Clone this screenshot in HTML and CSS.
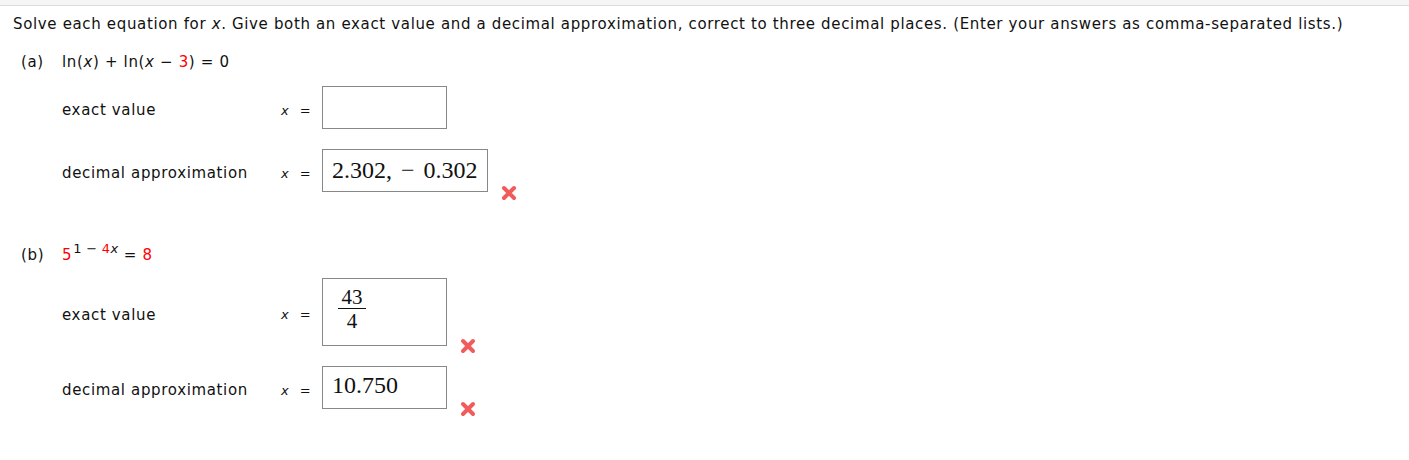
FILE: index.html
```html
<!DOCTYPE html>
<html>
<head>
<meta charset="utf-8">
<link rel="stylesheet" href="styles.css">
</head>
<body>
<div class="topbar"></div>
<div class="content">
  <p class="intro">Solve each equation for <i>x</i>. Give both an exact value and a decimal approximation, correct to three decimal places. (Enter your answers as comma-separated lists.)</p>

  <div class="part part-a">
    <span class="tag">(a)</span>
    <span class="eq">ln(<i>x</i>) + ln(<i>x</i> &minus; <span class="red">3</span>) = 0</span>
  </div>

  <div class="row row-a1">
    <span class="label">exact value</span>
    <span class="xeq"><i>x</i><span class="eqsign">=</span></span>
    <span class="box box-a1"></span>
  </div>

  <div class="row row-a2">
    <span class="label">decimal approximation</span>
    <span class="xeq"><i>x</i><span class="eqsign">=</span></span>
    <span class="box box-a2"><span class="math">2.302, &minus; 0.302</span></span>
    <span class="wrong"><svg viewBox="0 0 16 16" width="16" height="16"><path d="M3 3 L13 13 M13 3 L3 13" stroke="#f15b5b" stroke-width="4" stroke-linecap="round"/></svg></span>
  </div>

  <div class="part part-b">
    <span class="tag">(b)</span>
    <span class="eq"><span class="red">5</span><sup class="sup">1 &minus; <span class="red">4</span><i>x</i></sup> = <span class="red">8</span></span>
  </div>

  <div class="row row-b1">
    <span class="label">exact value</span>
    <span class="xeq"><i>x</i><span class="eqsign">=</span></span>
    <span class="box box-b1">
      <span class="frac"><span class="num">43</span><span class="bar"></span><span class="den">4</span></span>
    </span>
    <span class="wrong"><svg viewBox="0 0 16 16" width="16" height="16"><path d="M3 3 L13 13 M13 3 L3 13" stroke="#f15b5b" stroke-width="4" stroke-linecap="round"/></svg></span>
  </div>

  <div class="row row-b2">
    <span class="label">decimal approximation</span>
    <span class="xeq"><i>x</i><span class="eqsign">=</span></span>
    <span class="box box-b2"><span class="math">10.750</span></span>
    <span class="wrong"><svg viewBox="0 0 16 16" width="16" height="16"><path d="M3 3 L13 13 M13 3 L3 13" stroke="#f15b5b" stroke-width="4" stroke-linecap="round"/></svg></span>
  </div>
</div>
</body>
</html>
```
FILE: styles.css
```css
html, body {
  margin: 0;
  padding: 0;
  background: #fff;
}
body {
  font-family: Verdana, "DejaVu Sans", sans-serif;
  font-size: 15px;
  letter-spacing: 0.65px;
  color: #111;
}
.topbar {
  height: 5px;
  background: #f5f5f5;
  border-bottom: 1px solid #dcdcdc;
}
.content {
  padding-left: 13px;
  padding-bottom: 40px;
}
.intro {
  margin: 0;
  padding-top: 8px;
  line-height: 20px;
  height: 20px;
  white-space: nowrap;
}
.red { color: #ff0000; }
.part {
  display: flex;
  align-items: center;
  height: 24px;
  padding-left: 8px;
}
.part-a { margin-top: 16px; }
.part-b { margin-top: 51px; }
.tag { width: 41px; }
.sup {
  font-size: 13px;
  vertical-align: 7px;
  line-height: 0;
  margin-left: 1px;
  word-spacing: 0;
  letter-spacing: 0.3px;
}
.row {
  display: flex;
  align-items: center;
  padding-left: 49px;
}
.row-a1 { margin-top: 12px; }
.row-a2 { margin-top: 20px; }
.row-b1 { margin-top: 11px; }
.row-b2 { margin-top: 20px; }
.label {
  width: 218px;
  flex-shrink: 0;
  padding-top: 5px;
}
.xeq {
  width: 42px;
  flex-shrink: 0;
  font-size: 13px;
  letter-spacing: 0;
  padding-left: 1px;
  padding-top: 5px;
  box-sizing: border-box;
}
.eqsign {
  margin-left: 11px;
}
.box {
  box-sizing: border-box;
  flex-shrink: 0;
  border: 1px solid #888;
  height: 43px;
  width: 125px;
  display: flex;
  align-items: center;
  padding-left: 9px;
  letter-spacing: 0;
}
.box-a2 { width: 166px; }
.box-b1 { height: 68px; padding-left: 15px; }
.box-b2 { height: 43px; align-items: flex-start; padding-top: 5px; }
.math {
  font-family: "Liberation Serif", "Times New Roman", serif;
  font-size: 24px;
  color: #111;
  white-space: nowrap;
  word-spacing: 3px;
}
.frac {
  display: flex;
  flex-direction: column;
  align-items: center;
  font-family: "Liberation Serif", "Times New Roman", serif;
  font-size: 21px;
  line-height: 18px;
  width: 28px;
  margin-bottom: 6px;
}
.bar {
  width: 28px;
  height: 1px;
  background: #111;
  margin: 2px 0 3px;
}
.wrong {
  align-self: flex-end;
  flex-shrink: 0;
  margin-left: 13px;
  margin-bottom: -9px;
  height: 16px;
  display: flex;
}
.row-b1 .wrong, .row-b2 .wrong { margin-bottom: -8px; }
```
